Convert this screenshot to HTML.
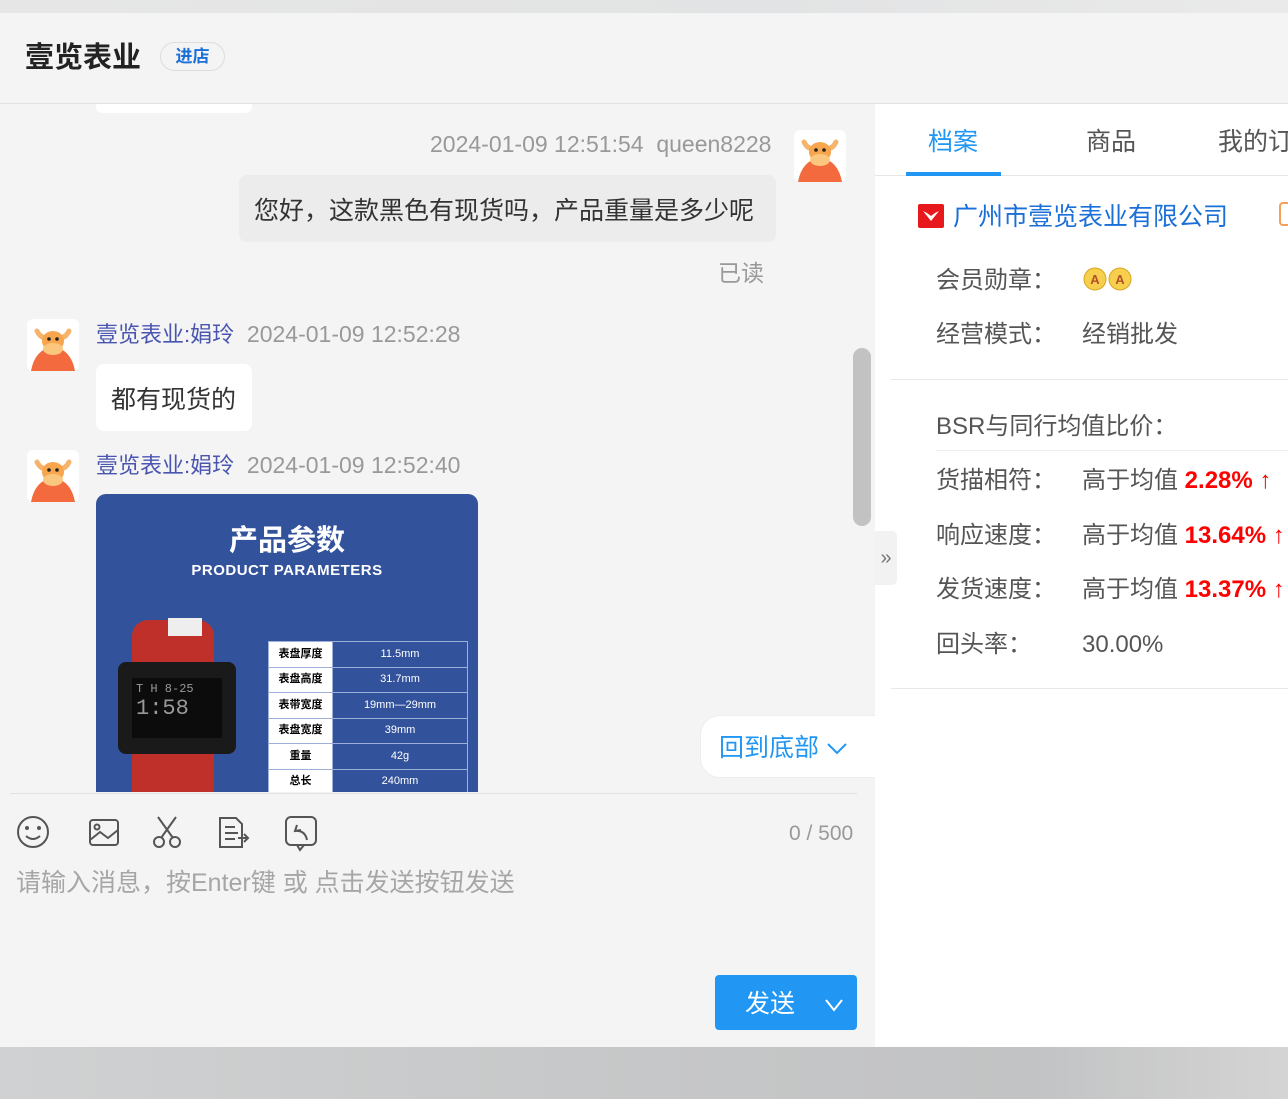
<!DOCTYPE html>
<html><head><meta charset="utf-8"><style>
*{margin:0;padding:0;box-sizing:border-box}
body{width:1288px;height:1099px;overflow:hidden;background:#f4f4f4;font-family:"Liberation Sans","Noto Sans CJK SC",sans-serif;position:relative;line-height:1.2}
.a{position:absolute}
.top{left:0;top:0;width:1288px;height:13px;background:linear-gradient(90deg,#e6e6e6,#e2e3e4 60%,#eaeaea)}
.hdr{left:0;top:13px;width:1288px;height:91px;background:#f4f4f4;border-bottom:1px solid #e2e2e2}
.bot{left:0;top:1047px;width:1288px;height:52px;background:linear-gradient(90deg,#cfd1d2,#c6c7c8 50%,#c2c3c4 80%,#d4d4d4)}
.gray{color:#999;font-size:23px}
.bub{background:#fff;border-radius:8px;font-size:25px;color:#333}
.name{color:#4a55b0;font-size:22px}
.lbl{font-size:24px;color:#555}
.red{color:#f00;font-weight:bold;font-size:24px}
table{border-collapse:collapse}
td{border:1px solid #9fb0d8;height:25.5px;font-size:11px;text-align:center}
</style></head><body>
<div class="a top"></div>
<div class="a hdr">
 <div class="a" style="left:25px;top:28px;font-size:29px;font-weight:bold;color:#222">壹览表业</div>
 <div class="a" style="left:160px;top:29px;width:65px;height:29px;border:1px solid #ddd;border-radius:15px;color:#1a6fd8;font-size:17px;font-weight:bold;text-align:center;line-height:27px">进店</div>
</div>
<div class="a" style="left:96px;top:104px;width:156px;height:9px;background:#fff;border-radius:0 0 6px 6px"></div>

<div class="a gray" style="left:430px;top:131px;white-space:nowrap">2024-01-09 12:51:54&nbsp; queen8228</div>
<svg class="a" style="left:794px;top:130px" width="52" height="52" viewBox="0 0 52 52"><rect width="52" height="52" rx="6" fill="#fff"/><path d="M4 52 Q8 30 26 28 Q44 30 48 52Z" fill="#f26a3d"/><path d="M10 12 Q14 20 20 18 M42 12 Q38 20 32 18" stroke="#f5b36b" stroke-width="5" fill="none" stroke-linecap="round"/><ellipse cx="26" cy="22" rx="11" ry="10" fill="#f7a64d"/><ellipse cx="26" cy="30" rx="10" ry="6" fill="#fbc77e"/><circle cx="22" cy="20" r="1.8" fill="#222"/><circle cx="30" cy="20" r="1.8" fill="#222"/></svg>
<div class="a bub" style="left:239px;top:175px;width:537px;height:67px;background:#ececec;padding:21px 15px 0;white-space:nowrap">您好，这款黑色有现货吗，产品重量是多少呢</div>
<div class="a gray" style="left:718px;top:260px">已读</div>

<svg class="a" style="left:27px;top:319px" width="52" height="52" viewBox="0 0 52 52"><rect width="52" height="52" rx="6" fill="#fff"/><path d="M4 52 Q8 30 26 28 Q44 30 48 52Z" fill="#f26a3d"/><path d="M10 12 Q14 20 20 18 M42 12 Q38 20 32 18" stroke="#f5b36b" stroke-width="5" fill="none" stroke-linecap="round"/><ellipse cx="26" cy="22" rx="11" ry="10" fill="#f7a64d"/><ellipse cx="26" cy="30" rx="10" ry="6" fill="#fbc77e"/><circle cx="22" cy="20" r="1.8" fill="#222"/><circle cx="30" cy="20" r="1.8" fill="#222"/></svg>
<div class="a" style="left:96px;top:321px;white-space:nowrap"><span class="name">壹览表业:娟玲</span><span class="gray">&nbsp; 2024-01-09 12:52:28</span></div>
<div class="a bub" style="left:96px;top:364px;width:156px;height:67px;padding:21px 15px 0">都有现货的</div>

<svg class="a" style="left:27px;top:450px" width="52" height="52" viewBox="0 0 52 52"><rect width="52" height="52" rx="6" fill="#fff"/><path d="M4 52 Q8 30 26 28 Q44 30 48 52Z" fill="#f26a3d"/><path d="M10 12 Q14 20 20 18 M42 12 Q38 20 32 18" stroke="#f5b36b" stroke-width="5" fill="none" stroke-linecap="round"/><ellipse cx="26" cy="22" rx="11" ry="10" fill="#f7a64d"/><ellipse cx="26" cy="30" rx="10" ry="6" fill="#fbc77e"/><circle cx="22" cy="20" r="1.8" fill="#222"/><circle cx="30" cy="20" r="1.8" fill="#222"/></svg>
<div class="a" style="left:96px;top:452px;white-space:nowrap"><span class="name">壹览表业:娟玲</span><span class="gray">&nbsp; 2024-01-09 12:52:40</span></div>
<div class="a" style="left:96px;top:494px;width:382px;height:298px;background:#33529c;border-radius:10px 10px 0 0;overflow:hidden">
 <div class="a" style="left:0;top:30px;width:382px;text-align:center;color:#fff;font-size:29px;font-weight:bold">产品参数</div>
 <div class="a" style="left:0;top:68px;width:382px;text-align:center;color:#fff;font-size:15px;font-weight:bold;letter-spacing:0.5px">PRODUCT PARAMETERS</div>
 <div class="a" style="left:36px;top:126px;width:82px;height:190px;background:#c0302a;border-radius:16px"></div>
 <div class="a" style="left:72px;top:124px;width:34px;height:18px;background:#eee"></div>
 <div class="a" style="left:22px;top:168px;width:118px;height:92px;background:#1a1a1a;border-radius:8px"></div>
 <div class="a" style="left:36px;top:184px;width:90px;height:60px;background:#0c0c0c;color:#999;font-family:'Liberation Mono',monospace;font-size:12px;padding:4px">T H  8-25<br><span style="font-size:22px">1:58</span></div>
 <table class="a" style="left:172px;top:147px;width:200px">
  <tr><td style="background:#fff;width:64px;font-weight:bold">表盘厚度</td><td style="color:#fff">11.5mm</td></tr>
  <tr><td style="background:#fff;font-weight:bold">表盘高度</td><td style="color:#fff">31.7mm</td></tr>
  <tr><td style="background:#fff;font-weight:bold">表带宽度</td><td style="color:#fff">19mm—29mm</td></tr>
  <tr><td style="background:#fff;font-weight:bold">表盘宽度</td><td style="color:#fff">39mm</td></tr>
  <tr><td style="background:#fff;font-weight:bold">重量</td><td style="color:#fff">42g</td></tr>
  <tr><td style="background:#fff;font-weight:bold">总长</td><td style="color:#fff">240mm</td></tr>
 </table>
</div>
<div class="a" style="left:853px;top:348px;width:18px;height:178px;background:#c2c2c2;border-radius:9px"></div>
<div class="a" style="left:700px;top:715px;width:176px;height:63px;background:#fff;border-radius:20px 0 0 20px;border:1px solid #eee;color:#2196f3;font-size:25px;padding:17px 0 0 18px;white-space:nowrap">回到底部 <svg width="22" height="14" viewBox="0 0 22 14"><path d="M2 2 L11 11 L20 2" stroke="#2196f3" stroke-width="2" fill="none"/></svg></div>

<div class="a" style="left:10px;top:793px;width:847px;height:1px;background:#e2e2e2"></div>
<svg class="a" style="left:14px;top:812px" width="330" height="40" viewBox="0 0 330 40" fill="none" stroke="#555" stroke-width="2">
 <circle cx="19" cy="20" r="15"/><circle cx="13" cy="16" r="1" fill="#555"/><circle cx="25" cy="16" r="1" fill="#555"/><path d="M12 24 Q19 30 26 24"/>
 <rect x="76" y="8" width="28" height="25" rx="3"/><circle cx="83" cy="15" r="2.5"/><path d="M76 28 L86 20 L94 26 L104 18"/>
 <circle cx="145" cy="30" r="5"/><circle cx="161" cy="30" r="5"/><path d="M147 26 L162 5 M159 26 L144 5"/>
 <path d="M206 6 H222 L228 12 V35 H206 Z M211 15 H221 M211 21 H224 M211 27 H221 M224 26 H234 M230 22 L234 26 L230 30"/>
 <rect x="272" y="5" width="30" height="28" rx="5"/><path d="M283 33 L286 38 L290 33" /><path d="M283 13 L281 19 L287 18 M281 19 Q291 18 293 28"/>
</svg>
<div class="a" style="left:789px;top:821px;color:#999;font-size:21px">0 / 500</div>
<div class="a" style="left:16px;top:868px;color:#a6a6a6;font-size:25px;white-space:nowrap">请输入消息，按Enter键 或 点击发送按钮发送</div>
<div class="a" style="left:715px;top:975px;width:142px;height:55px;background:#2196f3;border-radius:4px;color:#fff;font-size:25px;padding:14px 0 0 30px;white-space:nowrap">发送 <svg style="margin-left:22px" width="20" height="14" viewBox="0 0 20 14"><path d="M2 2 L10 12 L18 2" stroke="#fff" stroke-width="2" fill="none"/></svg></div>

<div class="a" style="left:875px;top:104px;width:413px;height:943px;background:#fff">
 <div class="a" style="left:0;top:71px;width:413px;height:1px;background:#e6e6e6"></div>
 <div class="a" style="left:53px;top:23px;font-size:25px;color:#2196f3">档案</div>
 <div class="a" style="left:31px;top:68px;width:95px;height:4px;background:#2196f3"></div>
 <div class="a" style="left:211px;top:23px;font-size:25px;color:#555">商品</div>
 <div class="a" style="left:343px;top:23px;font-size:25px;color:#555;white-space:nowrap">我的订</div>
 <svg class="a" style="left:43px;top:100px" width="26" height="24" viewBox="0 0 26 24"><rect width="26" height="24" rx="2" fill="#e8191c"/><path d="M5 7 L13 17 L21 7 L17 9 L13 12 L9 9Z" fill="#fff"/></svg>
 <div class="a" style="left:78px;top:98px;font-size:25px;color:#1a6fd8;white-space:nowrap">广州市壹览表业有限公司</div>
 <div class="a" style="left:404px;top:98px;width:12px;height:24px;border:2px solid #f5a05a;border-radius:4px"></div>
 <div class="a lbl" style="left:61px;top:163px">会员勋章：</div>
 <svg class="a" style="left:207px;top:162px" width="52" height="26" viewBox="0 0 52 26"><g fill="#f6d04d" stroke="#d9a520"><circle cx="13" cy="13" r="11"/><circle cx="38" cy="13" r="11"/></g><text x="13" y="18" font-size="13" text-anchor="middle" fill="#b5502a" font-weight="bold">A</text><text x="38" y="18" font-size="13" text-anchor="middle" fill="#b5502a" font-weight="bold">A</text></svg>
 <div class="a lbl" style="left:61px;top:217px">经营模式：</div>
 <div class="a lbl" style="left:207px;top:217px">经销批发</div>
 <div class="a" style="left:16px;top:275px;width:397px;height:1px;background:#e8e8e8"></div>
 <div class="a lbl" style="left:61px;top:309px">BSR与同行均值比价：</div>
 <div class="a" style="left:61px;top:346px;width:352px;height:1px;background:#ececec"></div>
 <div class="a lbl" style="left:61px;top:363px">货描相符：</div>
 <div class="a lbl" style="left:207px;top:363px;white-space:nowrap">高于均值 <span class="red">2.28% ↑</span></div>
 <div class="a lbl" style="left:61px;top:418px">响应速度：</div>
 <div class="a lbl" style="left:207px;top:418px;white-space:nowrap">高于均值 <span class="red">13.64% ↑</span></div>
 <div class="a lbl" style="left:61px;top:472px">发货速度：</div>
 <div class="a lbl" style="left:207px;top:472px;white-space:nowrap">高于均值 <span class="red">13.37% ↑</span></div>
 <div class="a lbl" style="left:61px;top:527px">回头率：</div>
 <div class="a lbl" style="left:207px;top:527px">30.00%</div>
 <div class="a" style="left:16px;top:584px;width:397px;height:1px;background:#e8e8e8"></div>
</div>
<div class="a" style="left:875px;top:531px;width:22px;height:54px;background:#f2f2f2;border-radius:0 5px 5px 0;color:#777;font-size:20px;text-align:center;line-height:54px">»</div>
<div class="a bot"></div>
</body></html>
